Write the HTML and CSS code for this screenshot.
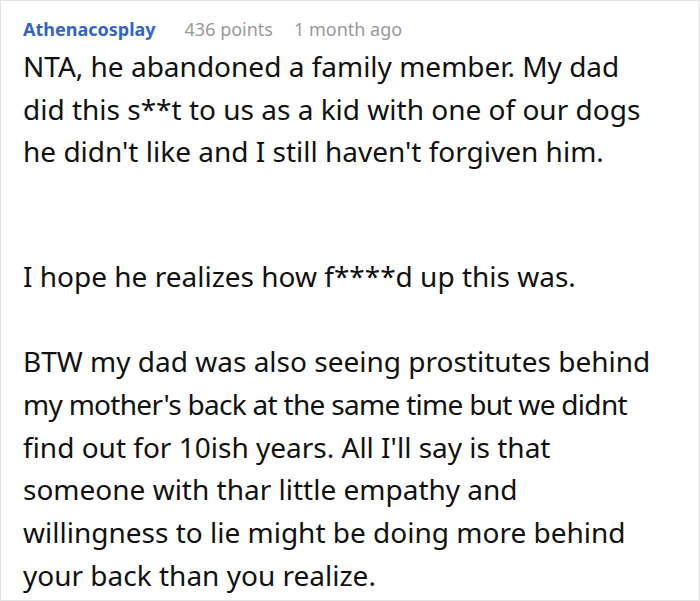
FILE: index.html
```html
<!DOCTYPE html>
<html>
<head>
<meta charset="utf-8">
<link rel="stylesheet" href="styles.css">
</head>
<body>
<div class="card">
  <div class="meta">
    <span class="author">Athenacosplay</span>
    <span class="points">436 points</span>
    <span class="time">1 month ago</span>
  </div>
  <div class="body">
    <p class="gap-lg">NTA, he abandoned a family member. My dad did this s**t to us as a kid with one of our dogs he didn't like and I still haven't forgiven him.</p>
    <p>I hope he realizes how f****d up this was.</p>
    <p>BTW my dad was also seeing prostitutes behind <span class="tight">my mother's back at the same time but we didnt</span> find out for 10ish years. All I'll say is that someone with thar little empathy and willingness to lie might be doing more behind your back than you realize.</p>
  </div>
</div>
</body>
</html>
```

FILE: styles.css
```css
html, body {
  margin: 0;
  padding: 0;
  background: #fff;
}
.card {
  box-sizing: border-box;
  width: 700px;
  height: 601px;
  border: 1px solid #e3e3e3;
  padding: 16px 40px 0 22px;
  overflow: hidden;
  font-family: "Noto Sans", "Open Sans", sans-serif;
}
.meta {
  display: flex;
  align-items: baseline;
  font-size: 18px;
  line-height: 24px;
}
.author {
  font-weight: 700;
  color: #3366c4;
  margin-right: 29px;
}
.points {
  color: #999;
  margin-right: 21px;
}
.time {
  color: #999;
}
.body {
  margin-top: 4px;
  font-size: 28px;
  line-height: 42.67px;
  color: #111;
}
.body p {
  margin: 0 0 42.67px 0;
}
.body p.gap-lg {
  margin-bottom: 82px;
}
.tight {
  letter-spacing: -0.7px;
}
```
